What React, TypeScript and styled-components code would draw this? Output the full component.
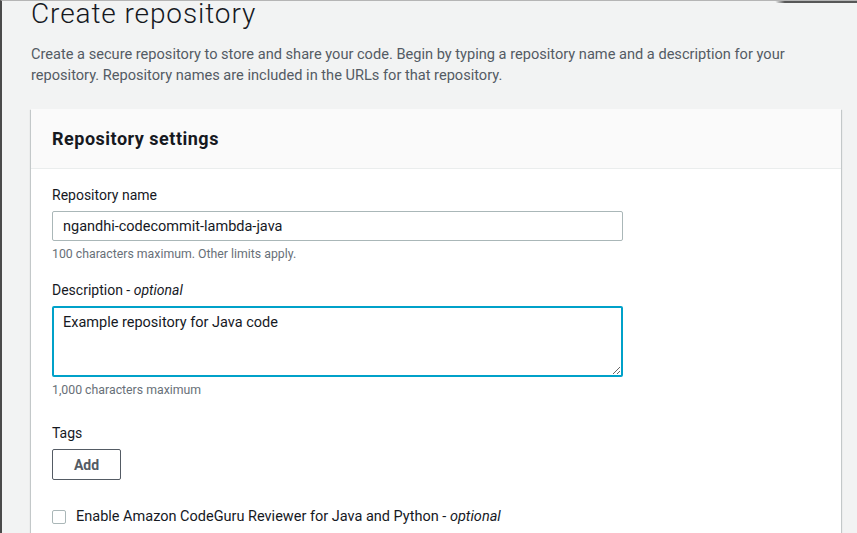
import React from "react";
import styled, { createGlobalStyle } from "styled-components";

const GlobalStyle = createGlobalStyle`
  html, body {
    margin: 0;
    padding: 0;
    background: #f2f3f3;
    height: 100%;
    overflow: hidden;
  }
  body {
    font-family: "Roboto", "Noto Sans", "Liberation Sans", sans-serif;
    color: #16191f;
  }
  * { box-sizing: border-box; }
`;

const Frame = styled.div`
  position: relative;
  width: 857px;
  height: 533px;
  border-left: 2px solid #4a4a4a;
  border-top: 1px solid #b5b5b5;
  background: #f2f3f3;
  overflow: hidden;
  padding: 0 16px 0 29px;
`;

const CornerShadow = styled.div`
  position: absolute;
  top: -1px;
  right: 0;
  width: 82px;
  height: 3px;
  background: linear-gradient(to right, rgba(60,60,60,0) 0%, #3c3c3c 12%, #3c3c3c 100%);
  border-radius: 0 0 0 3px;
  opacity: 0.85;
`;

const Title = styled.h1`
  margin: 0;
  font-size: 28px;
  line-height: 24px;
  padding-top: 1px;
  font-weight: 300;
  color: #16191f;
  letter-spacing: 0.9px;
`;

const Intro = styled.p`
  margin: 18px 0 0 0;
  font-size: 14.6px;
  line-height: 21px;
  color: #545b64;
  max-width: 800px;
`;

const Card = styled.section`
  margin-top: 23px;
  width: 810px;
  background: #ffffff;
  box-shadow: 0 1px 1px 0 rgba(0, 28, 36, 0.3), 1px 1px 1px 0 rgba(0, 28, 36, 0.15),
    -1px 1px 1px 0 rgba(0, 28, 36, 0.15);
`;

const CardHeader = styled.header`
  height: 60px;
  background: #fafafa;
  border-bottom: 1px solid #eaeded;
  display: flex;
  align-items: center;
  padding: 0 21px;
`;

const CardTitle = styled.h2`
  margin: 0;
  font-size: 18px;
  font-weight: 700;
  color: #16191f;
  letter-spacing: 0.5px;
`;

const CardBody = styled.div`
  padding: 16px 21px 40px;
  display: flex;
  flex-direction: column;
`;

const Field = styled.div<{ $gap?: number }>`
  display: flex;
  flex-direction: column;
  margin-top: ${(p) => p.$gap ?? 0}px;
`;

const Label = styled.label`
  font-size: 14px;
  line-height: 20px;
  color: #16191f;
  margin-bottom: 6px;
  em {
    font-style: italic;
  }
`;

const TextInput = styled.input`
  width: 571px;
  height: 30px;
  border: 1px solid #aab7b8;
  border-radius: 2px;
  padding: 0 10px;
  font-family: inherit;
  font-size: 14.5px;
  color: #16191f;
  background: #fff;
  outline: none;
`;

const TextArea = styled.textarea`
  width: 571px;
  height: 71px;
  border: 2px solid #00a1c9;
  border-radius: 2px;
  padding: 5px 9px;
  font-family: inherit;
  font-size: 14.5px;
  line-height: 20px;
  color: #16191f;
  background: #fff;
  outline: none;
  resize: vertical;
  display: block;
`;

const Hint = styled.div`
  margin-top: 5px;
  font-size: 12.3px;
  line-height: 16px;
  color: #687078;
`;

const Button = styled.button`
  width: 69px;
  height: 31px;
  background: #fff;
  border: 1px solid #545b64;
  border-radius: 2px;
  font-family: inherit;
  font-size: 14px;
  font-weight: 700;
  color: #545b64;
  cursor: pointer;
`;

const CheckRow = styled.label`
  margin-top: 28px;
  display: flex;
  align-items: center;
  gap: 10px;
  font-size: 14.5px;
  color: #16191f;
  em {
    font-style: italic;
  }
`;

const Box = styled.span`
  width: 14px;
  height: 14px;
  border: 1px solid #aab7b8;
  border-radius: 2px;
  background: #fff;
  display: inline-block;
`;

export default function App() {
  return (
    <>
      <GlobalStyle />
      <Frame>
        <CornerShadow />
        <Title>Create repository</Title>
        <Intro>
          Create a secure repository to store and share your code. Begin by typing a repository name and a
          description for your repository. Repository names are included in the URLs for that repository.
        </Intro>
        <Card>
          <CardHeader>
            <CardTitle>Repository settings</CardTitle>
          </CardHeader>
          <CardBody>
            <Field>
              <Label>Repository name</Label>
              <TextInput defaultValue="ngandhi-codecommit-lambda-java" readOnly />
              <Hint>100 characters maximum. Other limits apply.</Hint>
            </Field>
            <Field $gap={18}>
              <Label>
                Description - <em>optional</em>
              </Label>
              <TextArea defaultValue="Example repository for Java code" readOnly />
              <Hint>1,000 characters maximum</Hint>
            </Field>
            <Field $gap={25}>
              <Label>Tags</Label>
              <div>
                <Button>Add</Button>
              </div>
            </Field>
            <CheckRow>
              <Box />
              <span>
                Enable Amazon CodeGuru Reviewer for Java and Python - <em>optional</em>
              </span>
            </CheckRow>
          </CardBody>
        </Card>
      </Frame>
    </>
  );
}
